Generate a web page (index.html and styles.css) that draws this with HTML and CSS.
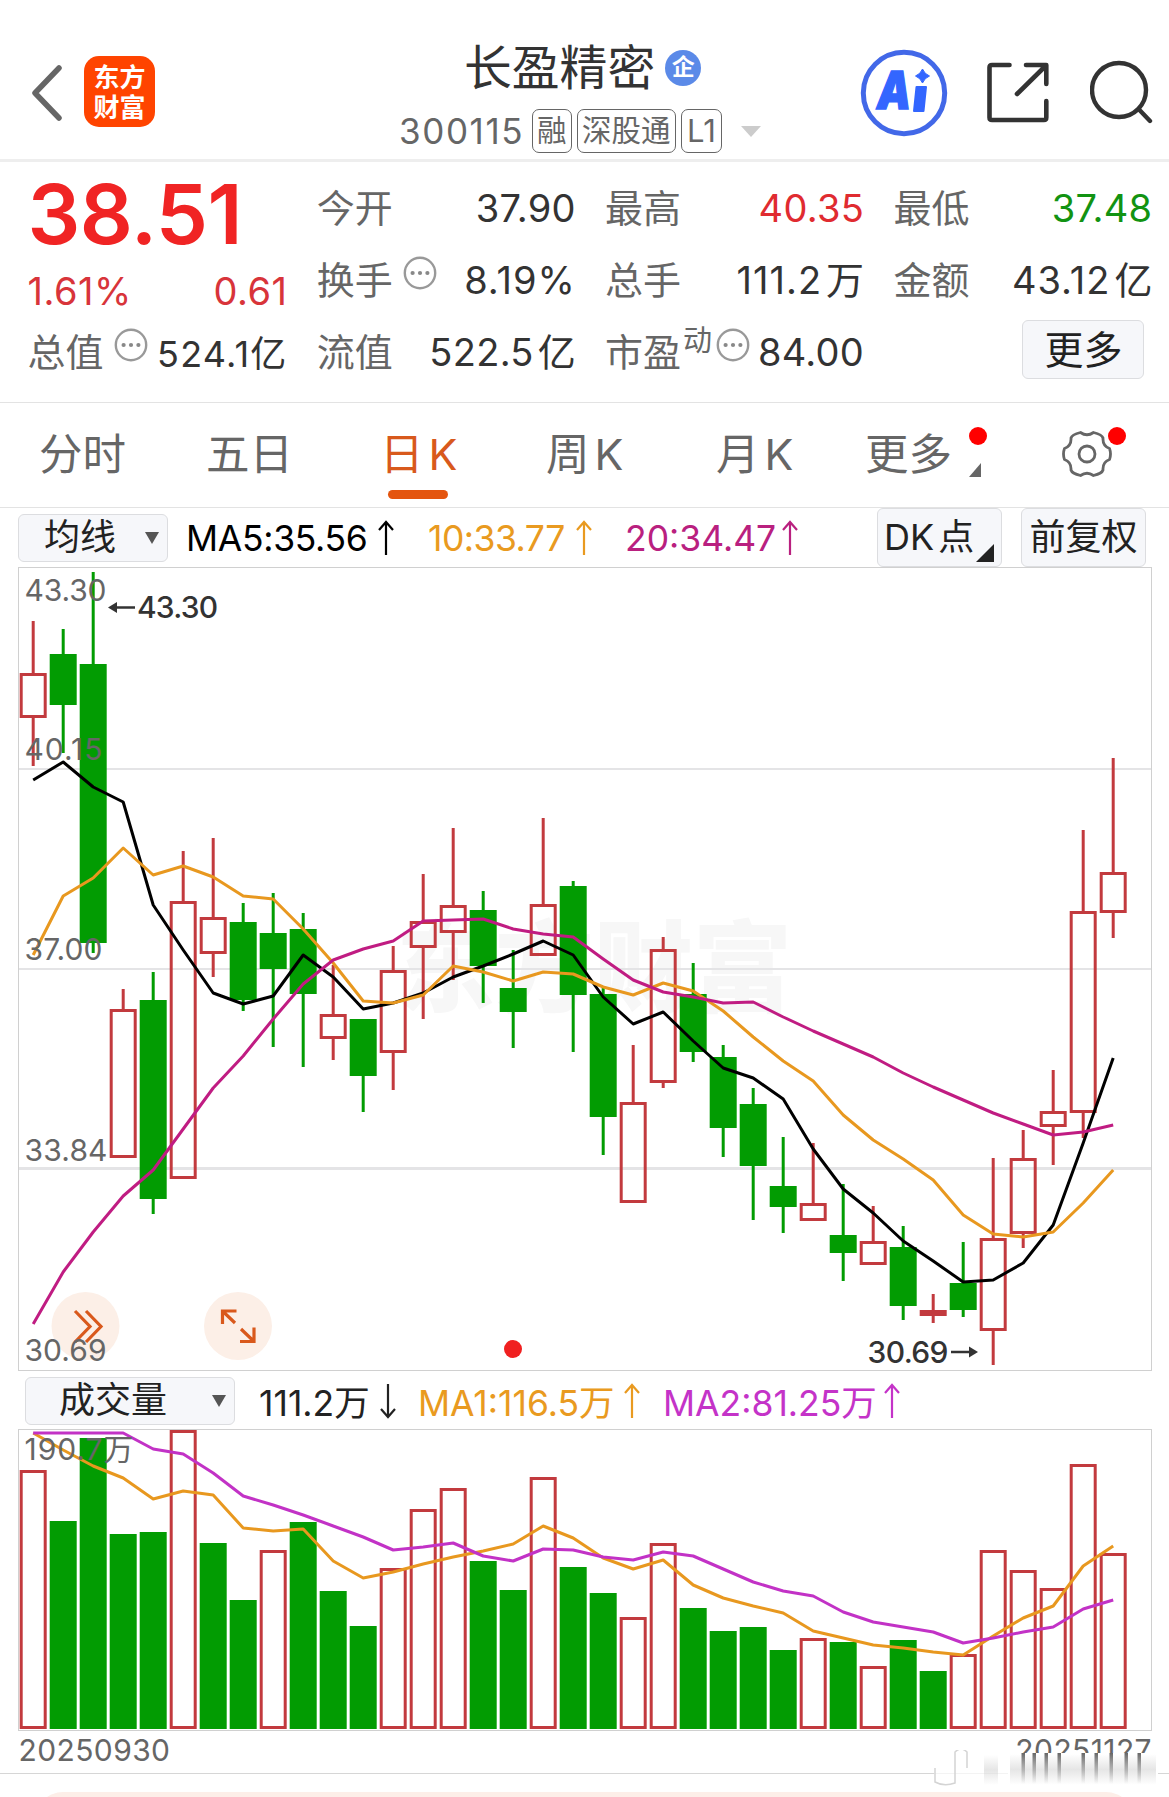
FILE: index.html
```
<!DOCTYPE html>
<html lang="zh-CN">
<head>
    <meta charset="UTF-8">
    <meta name="viewport" content="width=device-width, initial-scale=1.0">
    <title>长盈精密 300115</title>
    <link rel="stylesheet" href="styles.css">
</head>
<body>
    <svg class="defs" width="0" height="0">
        <symbol id="more" viewBox="0 0 34 34">
            <circle cx="17" cy="17" r="15.2" fill="none" stroke="#999" stroke-width="2.4"/>
            <g fill="#888"><circle cx="9.6" cy="17" r="2.1"/><circle cx="17" cy="17" r="2.1"/><circle cx="24.4" cy="17" r="2.1"/></g>
        </symbol>
        <symbol id="up" viewBox="0 0 18 36">
            <path d="M9 35V2M2 10L9 2L16 10" fill="none" stroke="currentColor" stroke-width="2.2"/>
        </symbol>
        <symbol id="down" viewBox="0 0 18 36">
            <path d="M9 1V34M2 26L9 34L16 26" fill="none" stroke="currentColor" stroke-width="2.2"/>
        </symbol>
    </svg>

    <header class="header">
        <div class="header-left">
            <svg class="back" width="34" height="56" viewBox="0 0 34 56"><path d="M29 3L5 28L29 53" fill="none" stroke="#666" stroke-width="5.5" stroke-linecap="round" stroke-linejoin="round"/></svg>
            <div class="logo"><span>东方</span><span>财富</span></div>
        </div>
        <div class="title">
            <div class="title-name"><h1>长盈精密</h1><span class="badge">企</span></div>
            <div class="title-code">
                <span class="code">300115</span>
                <span class="tag">融</span>
                <span class="tag">深股通</span>
                <span class="tag tag-l1">L1</span>
                <i class="caret"></i>
            </div>
        </div>
        <div class="header-right">
            <svg width="88" height="88" viewBox="0 0 88 88">
                <circle cx="44" cy="44" r="40.7" fill="#fff" stroke="#4268e8" stroke-width="5"/>
                <text class="ai" x="17" y="60" textLength="34" lengthAdjust="spacingAndGlyphs">A</text>
                <path d="M56.500 38H66L63.500 62H54Z" fill="#3366ff" stroke="#3366ff" stroke-width="2" stroke-linejoin="round"/>
                <path d="M62.500 20Q64.500 25 69.500 27Q64.500 29 62.500 34Q60.500 29 55.500 27Q60.500 25 62.500 20Z" fill="#3366ff" stroke="#3366ff"/>
            </svg>
            <svg class="share" width="62" height="62" viewBox="0 0 62 62" fill="none" stroke="#333" stroke-width="4.600" stroke-linecap="round" stroke-linejoin="round">
                <path d="M22.500 3H5Q2.500 3 2.500 5.500V55.500Q2.500 58 5 58H57Q59.300 58 59.300 55.500V39M39 3H59.300V22M58 4.500L30 32"/>
            </svg>
            <svg class="search" width="64" height="64" viewBox="0 0 64 64" fill="none" stroke="#333" stroke-width="4.400" stroke-linecap="round">
                <circle cx="29" cy="30" r="27"/><path d="M49.500 50L60 61"/>
            </svg>
        </div>
    </header>

    <section class="quote">
        <div class="price-col">
            <div class="price">38.51</div>
            <div class="change"><span>1.61%</span><span>0.61</span></div>
            <div class="row total"><label>总值</label><svg class="info"><use href="#more"/></svg><b>524.1亿</b></div>
        </div>
        <div class="col">
            <div class="row"><label>今开</label><b>37.90</b></div>
            <div class="row"><label>换手</label><svg class="info"><use href="#more"/></svg><b class="wide">8.19%</b></div>
            <div class="row"><label>流值</label><b>522.5<i>亿</i></b></div>
        </div>
        <div class="col">
            <div class="row"><label>最高</label><b class="red">40.35</b></div>
            <div class="row"><label>总手</label><b class="wide">111.2<i>万</i></b></div>
            <div class="row"><label>市盈<sup>动</sup></label><svg class="info pe"><use href="#more"/></svg><b>84.00</b></div>
        </div>
        <div class="col">
            <div class="row"><label>最低</label><b class="green">37.48</b></div>
            <div class="row"><label>金额</label><b class="wide">43.12<i>亿</i></b></div>
            <div class="row"><button class="btn btn-more">更多</button></div>
        </div>
    </section>

    <nav class="tabs">
        <a>分时</a>
        <a>五日</a>
        <a class="active">日<em>K</em></a>
        <a>周<em>K</em></a>
        <a>月<em>K</em></a>
        <a class="has-more">更多</a>
        <a class="settings">
            <svg width="50" height="50" viewBox="0 0 50 50" fill="none" stroke="#666" stroke-width="2.800" stroke-linejoin="round">
                <path d="M18.500 3.500Q25 8 31.500 3.500Q40 5.500 41 9Q40.500 17 47.500 19.500Q49.500 25 47.500 30.500Q40.500 33 41 41Q40 44.500 31.500 46.500Q25 42 18.500 46.500Q10 44.500 9 41Q9.500 33 2.500 30.500Q.5 25 2.500 19.500Q9.500 17 9 9Q10 5.500 18.500 3.500Z"/>
                <circle cx="25" cy="25" r="8"/>
            </svg>
        </a>
    </nav>

    <div class="ma-bar">
        <button class="btn select">均线<i></i></button>
        <span class="ma ma5">MA5:35.56<svg><use href="#up"/></svg></span>
        <span class="ma ma10">10:33.77<svg><use href="#up"/></svg></span>
        <span class="ma ma20">20:34.47<svg><use href="#up"/></svg></span>
        <div class="ma-actions">
            <button class="btn dk">DK<span>点</span></button>
            <button class="btn">前复权</button>
        </div>
    </div>

    <svg class="chart" id="kline" width="1134" height="804" viewBox="18 567 1134 804">
        <text class="watermark" x="396" y="1004" textLength="396">东方财富</text>
        <path class="grid" d="M18 769H1152M18 969H1152"/>
        <path class="grid thick" d="M18 1168.500H1152"/>
        <rect class="frame" x="18.500" y="567.500" width="1133" height="803"/>
        <g fill="#fcefe7"><circle cx="85.500" cy="1326" r="34"/><circle cx="238" cy="1326" r="34"/></g>
        <g fill="none" stroke="#d9591c" stroke-width="3.200">
            <path d="M75 1311L90 1326.500L75 1342M86 1311L101 1326.500L86 1342"/>
            <path d="M222.500 1324V1311H236.500M223 1311.500L235 1323M240 1341.500H254V1327.500M253.500 1341L241 1329"/>
        </g>
        <g class="candles"></g>
        <g class="lines"></g>
        <g class="axis">
            <text x="24.500" y="600.500" textLength="82">43.30</text>
            <text x="24.500" y="759.500" textLength="78">40.15</text>
            <text x="24.500" y="959.500" textLength="78">37.00</text>
            <text x="24.500" y="1160.500" textLength="83">33.84</text>
            <text x="24.500" y="1360.500" textLength="82">30.69</text>
        </g>
        <g class="marks">
            <path d="M135 607.500H112" stroke="#333" stroke-width="2.500"/><path d="M108 607.500L117 602V613Z"/>
            <text x="137" y="618" textLength="81">43.30</text>
            <path d="M951 1352H974" stroke="#333" stroke-width="2.500"/><path d="M978 1352L969 1346.500V1357.500Z"/>
            <text x="867.500" y="1363" textLength="81">30.69</text>
        </g>
        <circle cx="513" cy="1349" r="9" fill="#f02020"/>
    </svg>

    <div class="ma-bar vol-bar">
        <button class="btn select">成交量<i></i></button>
        <span class="ma vol">111.2万<svg><use href="#down"/></svg></span>
        <span class="ma ma10">MA1:116.5万<svg><use href="#up"/></svg></span>
        <span class="ma vol-ma2">MA2:81.25万<svg><use href="#up"/></svg></span>
    </div>

    <svg class="chart" id="volume" width="1134" height="302" viewBox="18 1429 1134 302">
        <rect class="frame" x="18.500" y="1429.500" width="1133" height="301"/>
        <g class="candles"></g>
        <g class="lines"></g>
        <g class="axis"><text x="24.500" y="1459.500" textLength="109">190.7万</text></g>
    </svg>

    <div class="dates">
        <span>20250930</span>
        <span>20251127</span>
        <svg class="smear" width="235" height="38" viewBox="928 1750 235 38">
            <defs>
                <linearGradient id="fade" x1="0" y1="0" x2="0" y2="1"><stop offset="0" stop-color="#666"/><stop offset=".5" stop-color="#888" stop-opacity=".6"/><stop offset="1" stop-color="#999" stop-opacity="0"/></linearGradient>
                <linearGradient id="haze" x1="0" y1="0" x2="0" y2="1"><stop offset="0" stop-color="#ccc" stop-opacity="0"/><stop offset=".5" stop-color="#ccc" stop-opacity=".5"/><stop offset="1" stop-color="#ccc" stop-opacity="0"/></linearGradient>
            </defs>
            <rect x="1008" y="1753" width="150" height="33" fill="#fff"/>
            <rect x="934" y="1770" width="74" height="8" fill="#fff" opacity=".7"/>
            <path d="M935 1768V1782Q944 1787 955 1783V1752Q961 1746 967 1752V1768" fill="none" stroke="#d4d4d4" stroke-width="1.500"/>
            <rect x="984" y="1755" width="14" height="30" fill="url(#haze)"/>
            <rect x="1010" y="1754" width="146" height="31" fill="url(#haze)"/>
            <g class="streaks" fill="url(#fade)"></g>
        </svg>
    </div>
    <div class="bottom-card"></div>

    <script src="script.js"></script>
</body>
</html>
```

FILE: styles.css
```
* {
    box-sizing: border-box;
}

body {
    margin: 0;
    width: 1169px;
    height: 1797px;
    overflow: hidden;
    background: #fff;
    color: #333;
    font-family: Inter, "Noto Sans CJK SC", sans-serif;
    font-size: 38px;
}

.defs {
    position: absolute;
}

i, em, b {
    font-style: normal;
    font-weight: 400;
}

/* header */
.header {
    display: flex;
    justify-content: space-between;
    height: 162px;
    border-bottom: 3px solid #eee;
    padding: 0 15px 0 29px;
}

.header-left {
    display: flex;
    width: 371px;
    padding-top: 56px;
}

.back {
    margin: 9px -1px 0 1px;
}

.logo {
    display: flex;
    flex-direction: column;
    align-items: center;
    width: 71px;
    height: 71px;
    margin-left: 21px;
    padding-top: 7px;
    border-radius: 15px;
    background: #ff4400;
    color: #fff;
    font-size: 26px;
    font-weight: 700;
    line-height: 30px;
}

.title {
    flex: 1;
}

.title-name {
    display: flex;
    align-items: center;
    height: 60px;
    margin-top: 38px;
    padding-left: 64px;
}

h1 {
    margin: 0;
    font-size: 47.8px;
    font-weight: 400;
    line-height: 60px;
}

.badge {
    width: 36px;
    height: 36px;
    margin-left: 10px;
    border-radius: 50%;
    background: #5b8ae8;
    color: #fff;
    font-size: 23px;
    font-weight: 700;
    line-height: 35px;
    text-align: center;
}

.title-code {
    display: flex;
    align-items: center;
    height: 44px;
    margin-top: 11px;
    color: #666;
}

.code {
    width: 133px;
    margin-left: -1px;
    font-size: 35px;
    letter-spacing: 1.6px;
}

.tag {
    height: 44px;
    margin-right: 5.5px;
    padding: 0 4px;
    border: 1.5px solid #666;
    border-radius: 7px;
    font-size: 29.5px;
    line-height: 41px;
}

.tag-l1 {
    padding: 0 5px;
    font-size: 31px;
}

.caret {
    margin-left: 14px;
    border: 10px solid transparent;
    border-top: 11px solid #ccc;
    border-bottom: 0;
}

.header-right {
    display: flex;
    align-items: flex-start;
    padding-top: 49px;
}

.share {
    margin: 13px 0 0 39px;
}

.search {
    margin: 11px 0 0 41px;
}

.ai {
    font-size: 52px;
    font-weight: 900;
    font-style: italic;
    fill: #3366ff;
    stroke: #3366ff;
    stroke-width: 1.5px;
}

/* quote panel */
.quote {
    display: grid;
    grid-template-columns: 260px 259px 259px 259px;
    column-gap: 29.3px;
    height: 241px;
    padding: 10px 17px 0 27.5px;
    border-bottom: 1px solid #e3e3e3;
}

.price {
    height: 84px;
    color: #f02424;
    font-size: 83px;
    font-weight: 600;
    line-height: 84px;
    letter-spacing: -.5px;
}

.change {
    display: flex;
    justify-content: space-between;
    height: 60px;
    color: #d8343a;
    font-size: 38px;
    line-height: 70px;
    letter-spacing: .5px;
}

.row {
    display: flex;
    align-items: center;
    height: 72px;
    line-height: 72px;
    white-space: nowrap;
}

.row label {
    position: relative;
    color: #666;
    font-size: 38px;
}

.row b {
    margin-left: auto;
    letter-spacing: .3px;
}

.row .wide {
    letter-spacing: 1px;
}

.row b i {
    margin-left: 4px;
    letter-spacing: 0;
}

.total b {
    padding-top: 3px;
    font-size: 36px;
    letter-spacing: 1.2px;
}

.info {
    width: 34px;
    height: 34px;
    margin: -14px 0 0 10px;
}

.pe {
    margin-left: 35px;
}

.row sup {
    position: absolute;
    left: 78px;
    top: -11px;
    font-size: 29px;
}

.red {
    color: #e02b30;
}

.green {
    color: #129312;
}

.btn {
    position: relative;
    padding: 0;
    border: 1.5px solid #dcdde0;
    border-radius: 6px;
    background: #f6f7fa;
    color: #222;
    font-family: inherit;
    font-size: 36px;
    white-space: nowrap;
}

.btn-more {
    width: 122px;
    height: 59px;
    margin: -5px 8px 0 auto;
    font-size: 39px;
    line-height: 54px;
}

/* period tabs */
.tabs {
    display: flex;
    height: 105px;
    border-bottom: 1px solid #e3e3e3;
    color: #666;
    font-size: 43.5px;
    line-height: 102px;
}

.tabs a {
    position: relative;
    width: 168px;
    padding-left: 39px;
    white-space: nowrap;
}

.tabs em {
    margin-left: 5px;
    font-size: 43px;
}

.tabs .active {
    margin-left: 42px;
    margin-right: -37px;
    padding-left: 4px;
    color: #d8591c;
}

.tabs a:nth-child(1), .tabs a:nth-child(2) {
    width: 167px;
    margin: 0;
}

.tabs a:nth-child(4) {
    width: 170px;
}

.tabs a:nth-child(5) {
    width: 149px;
}

.tabs .active::after {
    content: '';
    position: absolute;
    left: 12px;
    bottom: 8px;
    width: 60px;
    height: 9px;
    border-radius: 5px;
    background: #e4550f;
}

.has-more::before, .settings::before {
    content: '';
    position: absolute;
    top: 24px;
    left: 143px;
    width: 18px;
    height: 18px;
    border-radius: 50%;
    background: #f00;
}

.has-more::after {
    content: '';
    position: absolute;
    left: 143px;
    top: 60px;
    border-left: 12px solid transparent;
    border-bottom: 14px solid #666;
}

.tabs .has-more {
    width: 210px;
}

.tabs .settings {
    width: 100px;
    padding: 26px 0 0 26px;
    line-height: 0;
}

.settings::before {
    left: 72px;
}

/* indicator rows */
.ma-bar {
    display: flex;
    align-items: center;
    height: 59px;
    padding: 0 23px 0 18px;
    font-size: 35.5px;
}

.select {
    width: 150px;
    height: 48px;
    padding-left: 25px;
    line-height: 45px;
    text-align: left;
}

.select i {
    position: absolute;
    right: 8px;
    top: 17px;
    border: 7px solid transparent;
    border-top: 12px solid #555;
    border-bottom: 0;
}

.ma {
    display: flex;
    align-items: center;
    padding-top: 2px;
    letter-spacing: -.3px;
    white-space: nowrap;
}

.ma svg {
    width: 18px;
    height: 36px;
    margin: -2px 0 0 auto;
}

.ma5 {
    width: 209px;
    margin-left: 18px;
    color: #000;
}

.ma10 {
    width: 165px;
    margin-left: 33px;
    color: #e99a20;
    letter-spacing: -.5px;
}

.ma20 {
    width: 174px;
    margin-left: 32px;
    color: #b9207f;
    letter-spacing: 0;
}

.ma-actions {
    display: flex;
    gap: 19px;
    margin-left: auto;
}

.ma-actions .btn {
    width: 125px;
    height: 59px;
    line-height: 55px;
}

.ma-actions .dk {
    padding-left: 6px;
    text-align: left;
}

.dk span {
    margin-left: 4px;
}

.dk::after {
    content: '';
    position: absolute;
    right: 7px;
    bottom: 4px;
    border-left: 18px solid transparent;
    border-bottom: 18px solid #222;
}

.vol-bar {
    height: 58px;
    padding: 1px 0 0 25px;
}

.vol-bar .select {
    width: 210px;
    padding-left: 33px;
}

.vol-bar .ma {
    padding-top: 0;
    letter-spacing: 0;
}

.vol-bar .ma svg {
    margin-top: 0;
}

.vol {
    width: 138px;
    margin-left: 24px;
    color: #222;
}

.vol-bar .ma10 {
    width: 223px;
    margin-left: 21px;
}

.vol-ma2 {
    width: 238px;
    margin-left: 22px;
    color: #c433c8;
}

/* charts */
.chart {
    display: block;
    margin-left: 18px;
}

.frame {
    fill: none;
    stroke: #d0d0d0;
}

.grid {
    stroke: #e4e4e6;
    stroke-width: 2;
}

.thick {
    stroke-width: 3;
}

.watermark {
    fill: #f7f7f7;
    font-size: 99px;
    font-weight: 900;
}

.axis {
    fill: #666;
    font-size: 30px;
}

.marks {
    fill: #333;
    font-size: 30px;
    font-weight: 500;
}

.up {
    fill: none;
    stroke: #c23a3e;
    stroke-width: 3;
}

.down {
    fill: #029c02;
    stroke: none;
}

.wick-up {
    stroke: #c23a3e;
    stroke-width: 3;
}

.wick-down {
    stroke: #029c02;
    stroke-width: 3;
}

.lines polyline {
    fill: none;
    stroke-width: 3;
    stroke-linejoin: round;
}

/* footer */
.dates {
    position: relative;
    display: flex;
    justify-content: space-between;
    height: 43px;
    padding: 0 17px 0 18.5px;
    border-bottom: 1px solid #d6d6d6;
    color: #666;
    font-size: 30px;
    letter-spacing: .4px;
    line-height: 38px;
}

.smear {
    position: absolute;
    left: 928px;
    top: 19px;
}

.bottom-card {
    height: 60px;
    margin: 18px 35px 0;
    border-radius: 28px;
    background: #fdeee8;
}
```

FILE: script.js
```
const NS = 'http://www.w3.org/2000/svg';
const X0 = 33.2;
const STEP = 30;
const BAR = 27;

// direction, high, body top, body bottom, low
const kline = [
    ['R', 621, 673, 718, 766], ['G', 629, 654, 705, 753], ['G', 572, 664, 943, 953],
    ['R', 989, 1009, 1158, 1158], ['G', 972, 1000, 1199, 1214], ['R', 851, 901, 1179, 1179],
    ['R', 838, 917, 954, 977], ['G', 903, 922, 1000, 1011], ['G', 893, 933, 969, 1047],
    ['G', 913, 929, 994, 1067], ['R', 965, 1014, 1039, 1060], ['G', 1019, 1019, 1076, 1112],
    ['R', 946, 970, 1053, 1090], ['R', 874, 921, 948, 1019], ['R', 828, 905, 933, 980],
    ['G', 891, 910, 966, 1003], ['G', 950, 988, 1012, 1048], ['R', 818, 904, 956, 956],
    ['G', 881, 886, 995, 1052], ['G', 987, 994, 1117, 1155], ['R', 1045, 1102, 1203, 1203],
    ['R', 937, 949, 1083, 1088], ['G', 963, 994, 1052, 1062], ['G', 1045, 1057, 1128, 1157],
    ['G', 1088, 1104, 1166, 1220], ['G', 1137, 1186, 1207, 1233], ['R', 1143, 1203, 1221, 1221],
    ['G', 1184, 1235, 1253, 1281], ['R', 1206, 1241, 1265, 1265], ['G', 1226, 1247, 1306, 1320],
    ['R', 1294, 1310, 1316, 1323], ['G', 1242, 1283, 1310, 1317], ['R', 1158, 1238, 1331, 1365],
    ['R', 1130, 1158, 1234, 1248], ['R', 1070, 1111, 1127, 1165], ['R', 830, 911, 1113, 1138],
    ['R', 758, 872, 913, 938]
];

const volume = [
    ['R', 1470], ['G', 1521], ['G', 1438], ['G', 1534], ['G', 1532], ['R', 1430], ['G', 1543],
    ['G', 1600], ['R', 1550], ['G', 1522], ['G', 1591], ['G', 1626], ['R', 1568], ['R', 1509],
    ['R', 1488], ['G', 1561], ['G', 1590], ['R', 1477], ['G', 1567], ['G', 1593], ['R', 1617],
    ['R', 1543], ['G', 1608], ['G', 1631], ['G', 1627], ['G', 1650], ['R', 1638], ['G', 1642],
    ['R', 1666], ['G', 1640], ['G', 1671], ['R', 1654], ['R', 1550], ['R', 1570], ['R', 1588],
    ['R', 1464], ['R', 1553]
];

const ma5 = [780, 762, 787, 802, 905, 950, 993, 1004, 996, 955, 977, 1009, 1003, 993, 977, 966, 954, 941, 955, 997, 1024, 1012, 1041, 1068, 1078, 1099, 1149, 1189, 1213, 1241, 1261, 1282, 1280, 1263, 1225, 1143, 1058];
const ma10 = [955, 896, 878, 848, 875, 866, 877, 896, 899, 929, 963, 1001, 1003, 995, 966, 972, 981, 972, 974, 987, 995, 983, 991, 1011, 1037, 1061, 1081, 1115, 1140, 1159, 1180, 1215, 1234, 1237, 1232, 1203, 1170];
const ma20 = [1324, 1272, 1232, 1196, 1170, 1129, 1088, 1056, 1019, 984, 960, 949, 941, 921, 920, 919, 929, 934, 937, 959, 980, 992, 997, 1003, 1002, 1017, 1031, 1044, 1057, 1073, 1087, 1100, 1113, 1124, 1135, 1132, 1125];
const volMa1 = [1433, 1450, 1466, 1478, 1499, 1491, 1495, 1528, 1531, 1529, 1561, 1578, 1572, 1564, 1557, 1551, 1544, 1526, 1538, 1558, 1569, 1560, 1585, 1598, 1606, 1613, 1631, 1638, 1645, 1648, 1652, 1655, 1636, 1618, 1606, 1566, 1546];
const volMa2 = [1433, 1433, 1433, 1433, 1449, 1454, 1473, 1496, 1505, 1515, 1526, 1537, 1550, 1547, 1543, 1556, 1561, 1549, 1550, 1557, 1560, 1552, 1556, 1569, 1582, 1591, 1596, 1612, 1622, 1627, 1632, 1643, 1638, 1632, 1627, 1609, 1600];

function add(parent, tag, attrs) {
    const el = document.createElementNS(NS, tag);
    for (const key in attrs) {
        el.setAttribute(key, attrs[key]);
    }
    parent.appendChild(el);
}

function drawBody(group, x, dir, top, bottom) {
    // hollow bodies are inset so the stroke stays inside the bar width
    const inset = dir === 'R' ? 1.5 : 0;
    add(group, 'rect', {
        class: dir === 'R' ? 'up' : 'down',
        x: x - BAR / 2 + inset,
        y: top + inset,
        width: BAR - inset * 2,
        height: bottom - top - inset * 2
    });
}

function drawWick(group, x, dir, y1, y2) {
    if (y2 > y1) {
        add(group, 'line', { class: dir === 'R' ? 'wick-up' : 'wick-down', x1: x, x2: x, y1, y2 });
    }
}

function drawLine(svg, values, color) {
    const points = values.map((y, i) => `${X0 + i * STEP},${y}`).join(' ');
    add(svg.querySelector('.lines'), 'polyline', { points, stroke: color });
}

const klineSvg = document.getElementById('kline');
const volumeSvg = document.getElementById('volume');

kline.forEach(([dir, high, top, bottom, low], i) => {
    const group = klineSvg.querySelector('.candles');
    const x = X0 + i * STEP;
    drawWick(group, x, dir, high, top);
    drawWick(group, x, dir, bottom, low);
    drawBody(group, x, dir, top, bottom);
});

volume.forEach(([dir, top], i) => {
    drawBody(volumeSvg.querySelector('.candles'), X0 + i * STEP, dir, top, 1729);
});

drawLine(klineSvg, ma5, '#000');
drawLine(klineSvg, ma10, '#e8981f');
drawLine(klineSvg, ma20, '#c01c82');
drawLine(volumeSvg, volMa1, '#e8981f');
drawLine(volumeSvg, volMa2, '#c232c6');

[1023, 1034, 1046, 1059, 1083, 1096, 1111, 1126, 1139].forEach((x) => {
    add(document.querySelector('.streaks'), 'rect', { x: x - 1.5, y: 1753, width: 3.5, height: 31 });
});
```
